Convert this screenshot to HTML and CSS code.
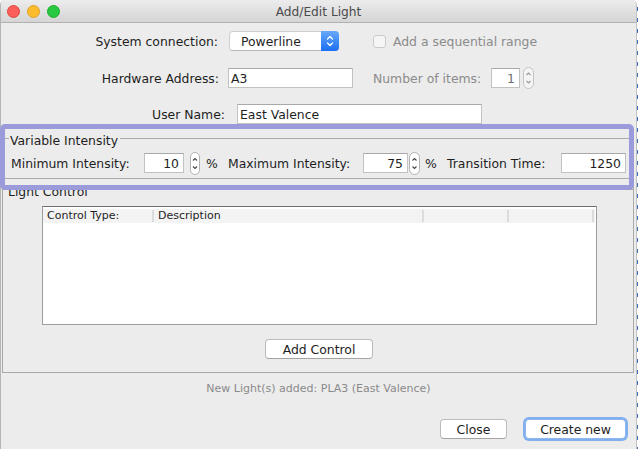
FILE: index.html
```html
<!DOCTYPE html>
<html>
<head>
<meta charset="utf-8">
<link rel="stylesheet" href="styles.css">
</head>
<body>
<div class="screen">
  <div class="window">
    <div class="titlebar">
      <div class="lights">
        <span class="light red"></span><span class="light yellow"></span><span class="light green"></span>
      </div>
      <div class="title">Add/Edit Light</div>
      <div></div>
    </div>
    <div class="form">
      <div class="row row1">
        <span class="lbl l1">System connection:</span>
        <div class="select">
          <span class="select-text">Powerline</span>
          <span class="select-btn">
            <svg width="18" height="20" viewBox="0 0 18 20"><path d="M6.5 8 L9 5.5 L11.5 8 M6.5 12 L9 14.5 L11.5 12" fill="none" stroke="#fff" stroke-width="1.3" stroke-linecap="round" stroke-linejoin="round"/></svg>
          </span>
        </div>
        <span class="checkbox"></span>
        <span class="dim seq">Add a sequential range</span>
      </div>
      <div class="row row2">
        <span class="lbl l2">Hardware Address:</span>
        <div class="field hw">A3</div>
        <span class="dim nitems">Number of items:</span>
        <div class="field num count">1</div>
        <span class="spin sp-count"><svg width="11" height="22" viewBox="0 0 11 22"><rect x="0.5" y="0.5" width="10" height="21" rx="5" fill="#f4f4f4" stroke="#c4c4c4"/><path d="M3.5 8 L5.5 6 L7.5 8 M3.5 14 L5.5 16 L7.5 14" fill="none" stroke="#9a9a9a" stroke-width="1.1"/></svg></span>
      </div>
      <div class="row row3">
        <span class="lbl l3">User Name:</span>
        <div class="field uname">East Valence</div>
      </div>

      <div class="group vi">
        <div class="legend"><span class="legend-text">Variable Intensity</span></div>
        <div class="vi-row">
          <span class="t vlab1">Minimum Intensity:</span>
          <div class="field num f-min">10</div>
          <span class="spin sp-min"><svg width="10" height="23" viewBox="0 0 10 23"><rect x="0.5" y="0.5" width="9" height="22" rx="4.5" fill="#fff" stroke="#b3b3b3"/><path d="M3 8.5 L5 6.5 L7 8.5 M3 14.5 L5 16.5 L7 14.5" fill="none" stroke="#444" stroke-width="1.1"/></svg></span>
          <span class="t pct1">%</span>
          <span class="t vlab2">Maximum Intensity:</span>
          <div class="field num f-max">75</div>
          <span class="spin sp-max"><svg width="11" height="23" viewBox="0 0 11 23"><rect x="0.5" y="0.5" width="10" height="22" rx="5" fill="#fff" stroke="#b3b3b3"/><path d="M3.5 8.5 L5.5 6.5 L7.5 8.5 M3.5 14.5 L5.5 16.5 L7.5 14.5" fill="none" stroke="#444" stroke-width="1.1"/></svg></span>
          <span class="t pct2">%</span>
          <span class="t vlab3">Transition Time:</span>
          <div class="field num f-time">1250</div>
        </div>
      </div>

      <div class="group lc">
        <div class="legend"><span class="legend-text">Light Control</span></div>
        <div class="table">
          <div class="thead">
            <span class="th c1">Control Type:</span>
            <span class="th c2">Description</span>
            <span class="th c3"></span>
            <span class="th c4"></span>
          </div>
        </div>
        <div class="btn-row"><button class="btn add">Add Control</button></div>
      </div>

      <div class="status">New Light(s) added: PLA3 (East Valence)</div>

      <div class="buttons">
        <button class="btn close">Close</button>
        <button class="btn create">Create new</button>
      </div>
    </div>
  </div>
  <div class="edge"></div>
  <div class="highlight"></div>
</div>
</body>
</html>
```

FILE: styles.css
```css
html, body {
  margin: 0;
  padding: 0;
}
body {
  background: #ffffff;
  font-family: "DejaVu Sans", sans-serif;
  font-size: 12.4px;
  color: #1e1e1e;
}
.screen {
  position: relative;
  width: 638px;
  height: 449px;
  display: flex;
  overflow: hidden;
}
.window {
  width: 637px;
  height: 449px;
  box-sizing: border-box;
  border-left: 1px solid #b5b5b5;
  border-right: 1px solid #c2c2c2;
  border-radius: 5px 5px 0 0;
  background: #ececec;
  display: flex;
  flex-direction: column;
  overflow: hidden;
}
.edge {
  width: 1px;
  background: repeating-linear-gradient(#ffffff 0 7px, #3d70bd 7px 11px);
}

/* title bar */
.titlebar {
  height: 22px;
  flex: none;
  border-bottom: 1px solid #b1b1b1;
  background: linear-gradient(#ececec, #d5d5d5);
  display: grid;
  grid-template-columns: 1fr auto 1fr;
  align-items: center;
}
.lights {
  display: flex;
  gap: 7px;
  padding-left: 6px;
}
.light {
  width: 13px;
  height: 13px;
  border-radius: 50%;
  box-sizing: border-box;
}
.red { background: #fc5f57; border: 1px solid #df4740; }
.yellow { background: #fdbc2e; border: 1px solid #dea123; }
.green { background: #28c840; border: 1px solid #1dad2b; }
.title {
  color: #4b4b4b;
  font-size: 12.2px;
  padding-top: 2px;
}

/* form rows */
.form {
  display: flex;
  flex-direction: column;
}
.row {
  display: flex;
  align-items: center;
  height: 20px;
}
.row1 { margin-top: 8px; }
.row2 { margin-top: 17px; }
.row3 { margin-top: 16px; }
.lbl {
  flex: none;
  text-align: right;
  white-space: nowrap;
  padding-top: 1px;
}
.l1 { width: 217px; }
.l2 { width: 218px; }
.l3 { width: 224px; }
.dim { color: #8b8b8b; white-space: nowrap; padding-top: 1px; }

.select {
  margin-left: 11px;
  width: 110px;
  height: 20px;
  box-sizing: border-box;
  display: flex;
  background: #ffffff;
  border: 1px solid #cfcfcf;
  border-bottom-color: #b8b8b8;
  border-radius: 4px;
}
.select-text {
  flex: 1;
  padding-left: 11px;
  line-height: 19px;
}
.select-btn {
  width: 18px;
  margin: -1px -1px -1px 0;
  border-radius: 0 4px 4px 0;
  background: linear-gradient(#69a9fb, #1b6ff2);
  display: flex;
}
.checkbox {
  margin-left: 34px;
  width: 13px;
  height: 13px;
  box-sizing: border-box;
  border: 1px solid #cbcbcb;
  border-radius: 3px;
  background: #f5f5f5;
}
.seq { margin-left: 7px; }

.field {
  height: 20px;
  box-sizing: border-box;
  background: #ffffff;
  border: 1px solid #c2c2c2;
  border-top-color: #a9a9a9;
  padding: 1px 2px 0;
  display: flex;
  align-items: center;
  white-space: nowrap;
  flex: none;
}
.num { justify-content: flex-end; padding-right: 4px; }
.hw { margin-left: 9px; width: 125px; }
.nitems { margin-left: 20px; width: 110px; }
.count { margin-left: 8px; width: 29px; color: #6f6f6f; }
.sp-count { margin-left: 3px; }
.uname { margin-left: 12px; width: 245px; }
.spin { display: flex; flex: none; }

/* titled groups */
.group {
  box-sizing: border-box;
  border-left: 1px solid #a9a9a9;
  border-right: 1px solid #a9a9a9;
  border-bottom: 1px solid #a9a9a9;
}
.legend {
  display: flex;
  height: 14px;
  margin: 0 -1px;
}
.legend::before,
.legend::after {
  content: "";
  border-top: 1px solid #a9a9a9;
  margin-top: 5px;
  align-self: flex-start;
}
.legend::before { width: 5px; }
.legend::after { flex: 1; margin-left: 2px; }
.legend-text {
  padding-left: 1px;
  line-height: 14px;
  padding-top: 1px;
  white-space: nowrap;
}

.vi {
  margin-top: 9px;
  margin-left: 3px;
  width: 626px;
  padding-bottom: 5px;
}
.vi-row {
  display: flex;
  align-items: center;
  height: 20px;
  margin-top: 6px;
  padding-left: 6px;
}
.t { white-space: nowrap; flex: none; padding-top: 1px; }
.vlab1 { width: 122px; }
.f-min { margin-left: 11px; width: 40px; }
.sp-min { margin-left: 6px; }
.pct1 { margin-left: 6px; width: 9px; }
.vlab2 { margin-left: 13px; width: 124px; }
.f-max { margin-left: 11px; width: 45px; }
.sp-max { margin-left: 1px; }
.pct2 { margin-left: 5px; width: 10px; }
.vlab3 { margin-left: 12px; width: 103px; }
.f-time { margin-left: 11px; width: 65px; }

.lc {
  margin-top: 5px;
  margin-left: 1px;
  width: 632px;
  padding-bottom: 13px;
}
.table {
  margin-top: 8px;
  margin-left: 39px;
  width: 555px;
  height: 119px;
  box-sizing: border-box;
  background: #ffffff;
  border: 1px solid #9d9d9d;
  border-top-color: #6e6e6e;
  padding: 2px 1px 0 0;
}
.thead {
  display: flex;
  height: 14px;
  box-sizing: border-box;
  padding-top: 1px;
  background: #f3f3f3;
  font-size: 11px;
}
.th {
  height: 12px;
  line-height: 12px;
  box-sizing: border-box;
  border-right: 2px solid #dcdcdc;
  padding-left: 4px;
  white-space: nowrap;
  flex: none;
}
.c1 { width: 111px; }
.c2 { width: 270px; }
.c3 { width: 85px; }
.c4 { width: 85px; }

.btn-row {
  display: flex;
  justify-content: center;
  margin-top: 14px;
}
.btn {
  font-family: "DejaVu Sans", sans-serif;
  font-size: 12.4px;
  color: #1e1e1e;
  height: 20px;
  box-sizing: border-box;
  background: #ffffff;
  border: 1px solid #bcbcbc;
  border-bottom-color: #a3a3a3;
  border-radius: 4px;
  padding: 1px 0 0;
  flex: none;
}
.add { width: 108px; margin-left: 2px; }

.status {
  margin-top: 9px;
  height: 14px;
  line-height: 14px;
  text-align: center;
  font-size: 11px;
  color: #8a8a8a;
}
.buttons {
  display: flex;
  justify-content: flex-end;
  gap: 18px;
  margin-top: 23px;
  padding-right: 10px;
}
.close { width: 67px; }
.create {
  width: 101px;
  border-color: #8db6ef;
  box-shadow: 0 0 0 2px rgba(102, 160, 238, 0.8);
}

/* annotation overlay */
.highlight {
  position: absolute;
  left: 0;
  top: 124px;
  width: 634px;
  height: 66px;
  box-sizing: border-box;
  border: 5px solid #9b9bdb;
  border-radius: 5px;
  pointer-events: none;
}
```
